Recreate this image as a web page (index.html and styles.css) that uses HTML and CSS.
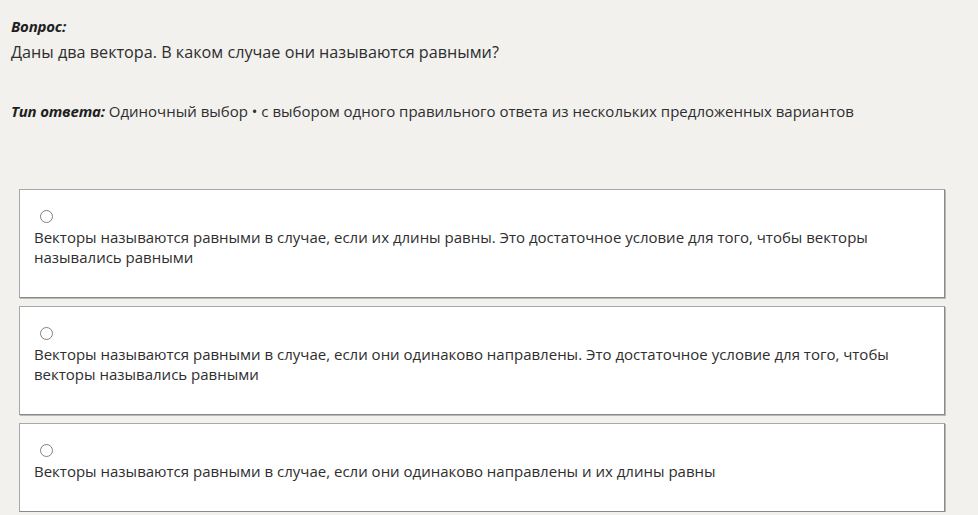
FILE: index.html
```html
<!DOCTYPE html>
<html lang="ru">
<head>
<meta charset="utf-8">
<link rel="stylesheet" href="styles.css">
</head>
<body>
<main class="page">
  <div class="label">Вопрос:</div>
  <div class="question">Даны два вектора. В каком случае они называются равными?</div>
  <div class="type"><span class="label-inline">Тип ответа:</span> Одиночный выбор • с выбором одного правильного ответа из нескольких предложенных вариантов</div>

  <div class="options">
    <label class="option">
      <input class="radio" type="radio" name="answer">
      <span class="option-text">Векторы называются равными в случае, если их длины равны. Это достаточное условие для того, чтобы векторы назывались равными</span>
    </label>
    <label class="option">
      <input class="radio" type="radio" name="answer">
      <span class="option-text">Векторы называются равными в случае, если они одинаково направлены. Это достаточное условие для того, чтобы векторы назывались равными</span>
    </label>
    <label class="option">
      <input class="radio" type="radio" name="answer">
      <span class="option-text">Векторы называются равными в случае, если они одинаково направлены и их длины равны</span>
    </label>
  </div>
</main>
</body>
</html>
```
FILE: styles.css
```css
html, body {
  margin: 0;
  padding: 0;
  background: #f2f1ee;
}

body {
  font-family: "Open Sans", "Noto Sans", sans-serif;
  font-size: 15px;
  line-height: 20px;
  color: #2e2e2e;
}

.page {
  padding: 16px 33px 0 11px;
}

.label,
.label-inline {
  font-weight: 700;
  font-style: italic;
  color: #1f1f1f;
  letter-spacing: -0.2px;
}

.question {
  margin-top: 5px;
  font-size: 16.2px;
  line-height: 22px;
}

.type {
  margin-top: 38px;
}

.options {
  margin-top: 68px;
  margin-left: 8px;
  display: flex;
  flex-direction: column;
  gap: 8px;
}

.option {
  display: block;
  background: #ffffff;
  border: 1px solid #a8a8a8;
  border-right: 1px solid #8a8a8a;
  border-bottom: 1px solid #8a8a8a;
  box-shadow: 1px 1px 0 #b9b9b9;
  padding: 20px 14px 30px 14px;
}

.radio {
  appearance: none;
  -webkit-appearance: none;
  display: block;
  box-sizing: border-box;
  width: 13px;
  height: 13px;
  margin: 0 0 0 6px;
  border: 1.5px solid #808080;
  border-radius: 50%;
  background: #ffffff;
}

.option-text {
  display: block;
  margin-top: 4px;
}
```
